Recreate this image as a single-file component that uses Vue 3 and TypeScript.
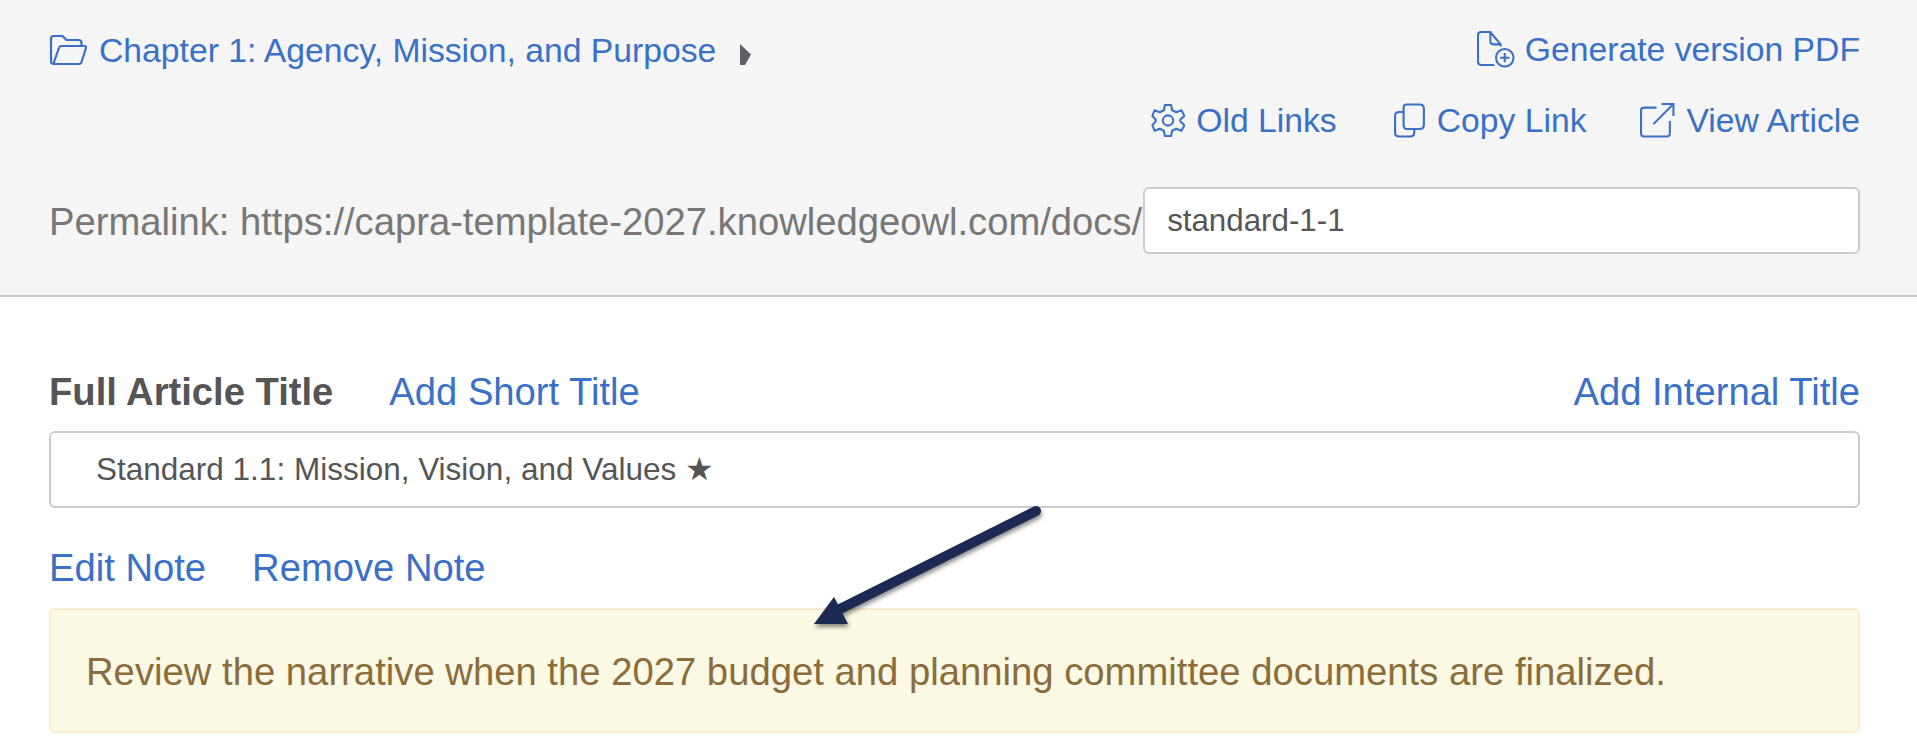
<script setup lang="ts">
const actions = [
  { label: 'Old Links', icon: 'gear' },
  { label: 'Copy Link', icon: 'copy' },
  { label: 'View Article', icon: 'ext' },
]
</script>

<template>
  <div class="page">
    <header class="top">
      <div class="row-one">
        <a class="link chapter">
          <svg class="icon folder" viewBox="0 0 38 32" fill="none" stroke="currentColor" stroke-width="2.2" stroke-linejoin="round">
            <path d="M6 30H4Q1.500 30 1.500 27V5Q1.500 2 4 2H13L17 6H29Q32 6 32 9V12" />
            <path d="M6 30Q4 30 4.500 28L9.500 14Q10 12 12 12H34.500Q37 12 36.500 14L32 28Q31.500 30 29 30Z" />
          </svg>
          Chapter 1: Agency, Mission, and Purpose
        </a>
        <svg class="caret" viewBox="0 0 13 23"><path d="M1 1L12 11.500L6 22H1Z" fill="#5f5f63" /></svg>
        <a class="link pdf">
          <svg class="icon filep" viewBox="0 0 36 36" fill="none" stroke="currentColor" stroke-width="2">
            <path d="M17 33H4Q1 33 1 30V4Q1 1 4 1H13L23 13V15M13 1V10Q13 13 16 13H23" />
            <circle cx="27" cy="26" r="8.500" />
            <path d="M27 21.500V30.500M22.500 26H31.500" />
          </svg>
          Generate version PDF
        </a>
      </div>
      <div class="row-two">
        <a v-for="a in actions" :key="a.label" class="link action">
          <svg v-if="a.icon === 'gear'" class="icon gear" viewBox="0 0 32 34" fill="none" stroke="currentColor" stroke-width="2" stroke-linejoin="round">
            <path d="M13 2H19L20 7L24 9L29 7L32 12.500L28 16V18L32 21.500L29 27L24 25L20 27L19 32H13L12 27L8 25L3 27L0.800 21.500L4 18V16L0.800 12.500L3 7L8 9L12 7Z" />
            <circle cx="16" cy="17" r="5" />
          </svg>
          <svg v-else-if="a.icon === 'copy'" class="icon copy" viewBox="0 0 30 32" fill="none" stroke="currentColor" stroke-width="2">
            <path d="M9 4Q9 1 12 1H24Q28 1 28 5V20Q28 24 24 24H12Q9 24 9 20Z" />
            <path d="M9 8H5Q1 8 1 12V27Q1 31 5 31H15Q19 31 19 27V24" />
          </svg>
          <svg v-else class="icon ext" viewBox="0 0 34 34" fill="none" stroke="currentColor" stroke-width="2">
            <path d="M16 5H4Q1 5 1 8V30Q1 33 4 33H26Q29 33 29 30V18M13 21L32 2M21 1.500H32.500V13" />
          </svg>
          {{ a.label }}
        </a>
      </div>
      <div class="perma">
        <span class="perma-text">Permalink: https://capra-template-2027.knowledgeowl.com/docs/</span>
        <input class="field perma-input" value="standard-1-1" />
      </div>
    </header>

    <main class="body">
      <div class="title-row">
        <strong class="label">Full Article Title</strong>
        <a class="link short">Add Short Title</a>
        <a class="link internal">Add Internal Title</a>
      </div>
      <input class="field title-input" value="Standard 1.1: Mission, Vision, and Values ★" />
      <div class="note-links">
        <a class="link">Edit Note</a>
        <a class="link">Remove Note</a>
      </div>
      <div class="alert">Review the narrative when the 2027 budget and planning committee documents are finalized.</div>
    </main>

    <svg class="arrow" viewBox="0 0 1917 753" width="1917" height="753">
      <defs>
        <filter id="arrow-shadow" x="-10%" y="-10%" width="125%" height="125%">
          <feDropShadow dx="1" dy="3" stdDeviation="2" flood-color="#000" flood-opacity="0.45" />
        </filter>
      </defs>
      <g filter="url(#arrow-shadow)">
        <path d="M1036 511L832 613" stroke="#1c2951" stroke-width="10" stroke-linecap="round" fill="none" />
        <path d="M814 624H848L834 597Z" fill="#1c2951" />
      </g>
    </svg>
  </div>
</template>

<style scoped>
.page {
  position: relative;
  width: 1917px;
  height: 753px;
  overflow: hidden;
  background: #fff;
  font-family: "Liberation Sans", Arial, sans-serif;
  font-size: 38.2px;
  color: #555;
}
.link {
  color: #3a70c8;
  white-space: nowrap;
}
.top {
  box-sizing: border-box;
  height: 297px;
  padding: 25px 57px 0 49px;
  background: #f5f5f5;
  border-bottom: 2px solid #c8c8c8;
}
.row-one {
  display: flex;
  align-items: center;
  height: 50px;
  font-size: 33.7px;
}
.chapter {
  display: flex;
  align-items: center;
  gap: 11px;
}
.caret {
  width: 13px;
  height: 23px;
  margin: 8px 0 0 23px;
}
.pdf {
  display: flex;
  align-items: center;
  gap: 10px;
  margin-left: auto;
  padding-bottom: 2px;
}
.icon { flex: none; }
.folder { width: 39px; height: 32px; }
.filep { width: 39px; height: 37px; }
.row-two {
  display: flex;
  justify-content: flex-end;
  gap: 54px;
  margin-top: 20px;
  height: 50px;
  align-items: center;
  font-size: 33.7px;
}
.action {
  display: flex;
  align-items: center;
  gap: 11px;
}
.action:first-child { margin-right: 3px; }
.gear { width: 34px; height: 35px; }
.copy { width: 32px; height: 35px; }
.ext { width: 35px; height: 36px; }
.perma {
  display: flex;
  align-items: center;
  margin-top: 42px;
  color: #777;
}
.perma-text { padding-top: 2px; }
.field {
  box-sizing: border-box;
  border: 2px solid #ccc;
  border-radius: 6px;
  background: #fff;
  font: inherit;
  color: #555;
  outline: none;
}
.perma-input {
  flex: 1;
  min-width: 0;
  height: 67px;
  padding: 0 22px;
  margin-left: 1px;
  font-size: 31.3px;
}
.body {
  padding: 73px 57px 0 49px;
}
.title-row {
  display: flex;
  align-items: center;
  height: 44px;
}
.label { color: #555; }
.short { margin-left: 56px; }
.internal { margin-left: auto; }
.title-input {
  display: block;
  width: 100%;
  height: 77px;
  margin-top: 17px;
  padding: 0 45px;
  font-size: 31.5px;
}
.note-links {
  display: flex;
  gap: 46px;
  margin-top: 38px;
  height: 44px;
  align-items: center;
}
.alert {
  box-sizing: border-box;
  height: 125px;
  margin-top: 18px;
  padding: 2px 35px 0;
  display: flex;
  align-items: center;
  background: #fbf8e4;
  border: 2px solid #f8ebd0;
  border-radius: 6px;
  color: #8a6d3b;
  font-size: 38.25px;
  white-space: nowrap;
}
.arrow {
  position: absolute;
  left: 0;
  top: 0;
  pointer-events: none;
}
</style>

<style>
html, body { margin: 0; background: #fff; }
</style>
